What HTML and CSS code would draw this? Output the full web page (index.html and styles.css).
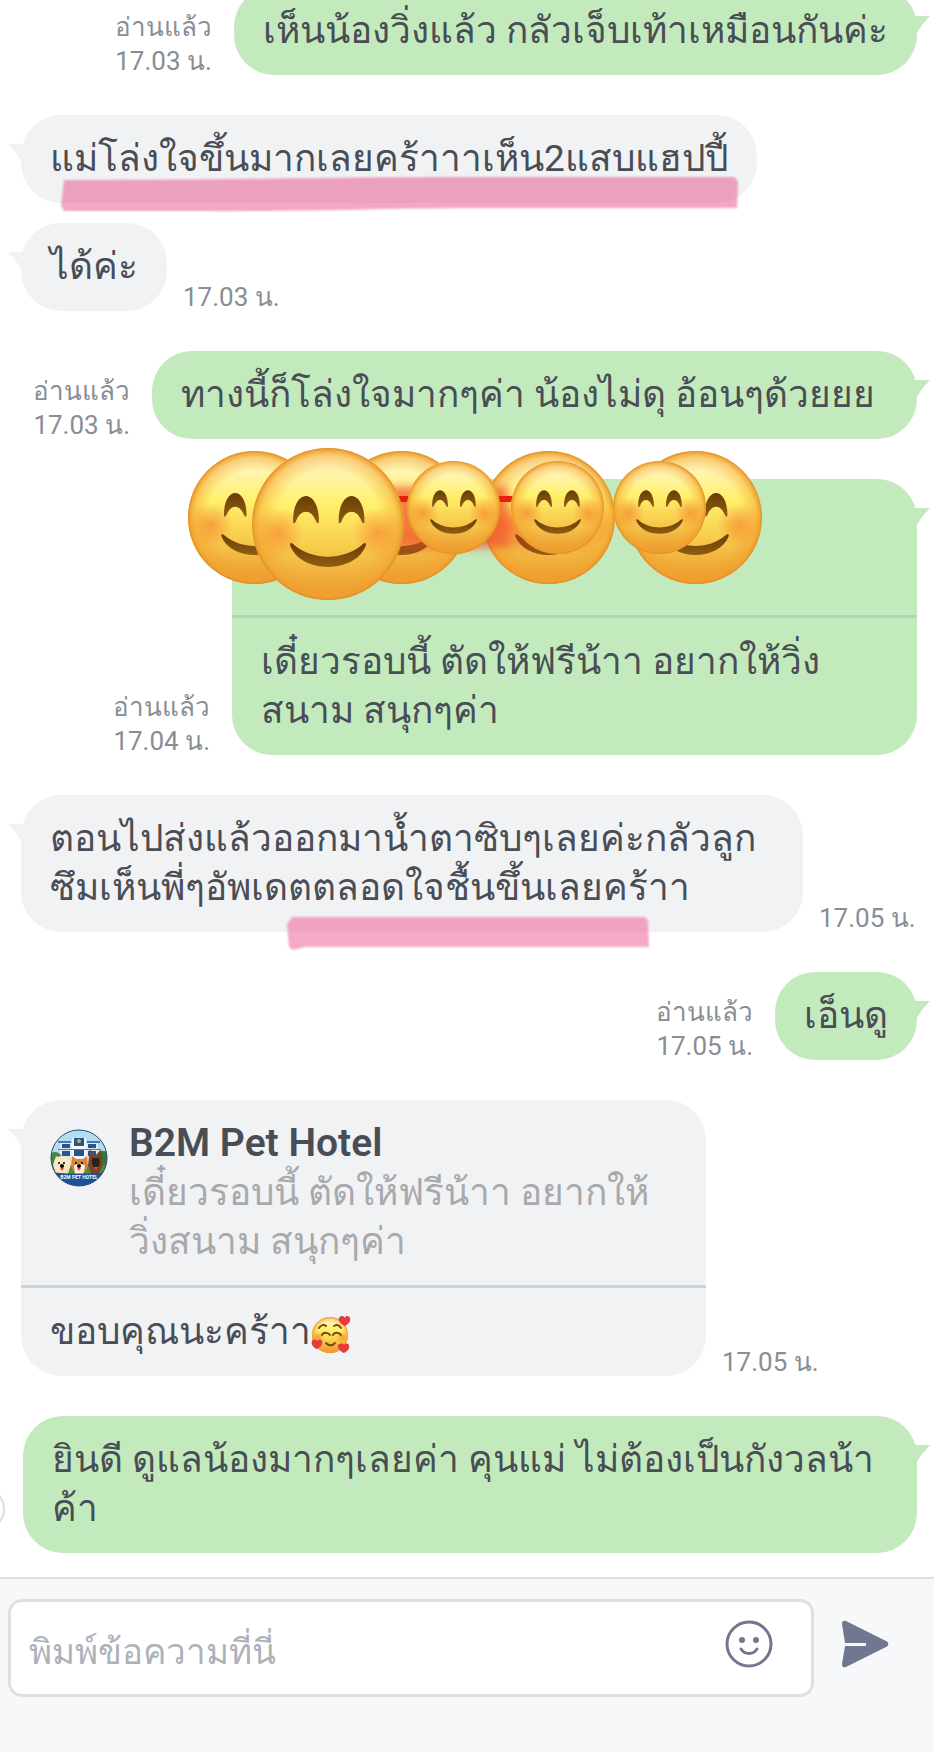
FILE: index.html
```html
<!DOCTYPE html>
<html lang="th">
<head>
    <meta charset="UTF-8" />
    <meta name="viewport" content="width=device-width, initial-scale=1.0"/>
    <title>B2M Pet Hotel - Chat</title>
    <link rel="stylesheet" href="styles.css">
</head>
<body>
    <!-- Shared shapes -->
    <svg class="defs" width="0" height="0" aria-hidden="true">
        <defs>
            <linearGradient id="face-fill" x1="0" y1="0" x2="0" y2="1">
                <stop offset="0" stop-color="#fff0b0"/>
                <stop offset="0.12" stop-color="#fff5b8"/>
                <stop offset="0.38" stop-color="#fff06a"/>
                <stop offset="0.65" stop-color="#f8cc4c"/>
                <stop offset="1" stop-color="#ea9631"/>
            </linearGradient>
            <radialGradient id="face-edge">
                <stop offset="0.7" stop-color="#f0a028" stop-opacity="0"/>
                <stop offset="0.9" stop-color="#f2a02c" stop-opacity="0.45"/>
                <stop offset="0.96" stop-color="#f0a02c" stop-opacity="0.8"/>
                <stop offset="1" stop-color="#e08c2a"/>
            </radialGradient>
            <radialGradient id="cheek">
                <stop offset="0" stop-color="#f4812c" stop-opacity="0.65"/>
                <stop offset="0.4" stop-color="#f4812c" stop-opacity="0.4"/>
                <stop offset="1" stop-color="#f4812c" stop-opacity="0"/>
            </radialGradient>
            <linearGradient id="brown" x1="0" y1="0" x2="0" y2="1">
                <stop offset="0" stop-color="#6a3d05"/>
                <stop offset="1" stop-color="#8f5d14"/>
            </linearGradient>
            <filter id="smear" x="-10%" y="-20%" width="120%" height="140%">
                <feGaussianBlur stdDeviation="4"/>
            </filter>
            <filter id="marker" x="-2%" y="-10%" width="104%" height="120%">
                <feGaussianBlur stdDeviation="1"/>
            </filter>
            <symbol id="smile" viewBox="0 0 100 100">
                <circle cx="50" cy="50" r="50" fill="url(#face-fill)"/>
                <circle cx="50" cy="50" r="50" fill="url(#face-edge)"/>
                <circle cx="17" cy="56" r="17" fill="url(#cheek)"/>
                <circle cx="83" cy="56" r="17" fill="url(#cheek)"/>
                <path d="M27 48c0-22 17-22 17 0 0 2-1 2-2 0-3-8-10-8-13 0-1 2-2 2-2 0z" fill="url(#brown)"/>
                <path d="M57 48c0-22 17-22 17 0 0 2-1 2-2 0-3-8-10-8-13 0-1 2-2 2-2 0z" fill="url(#brown)"/>
                <path d="M25 64c0-2 1-2 3 0 12 10 32 10 44 0 2-2 3-2 3 0-7 19-43 19-50 0z" fill="url(#brown)"/>
            </symbol>
        </defs>
    </svg>

    <main class="chat">
        <div class="message sent">
            <div class="meta"><span>อ่านแล้ว</span><time>17.03 น.</time></div>
            <div class="bubble">เห็นน้องวิ่งแล้ว กลัวเจ็บเท้าเหมือนกันค่ะ</div>
        </div>

        <div class="message received">
            <div class="bubble">
                แม่โล่งใจขึ้นมากเลยคร้าาาเห็น2แสบแฮปปี้
                <svg class="highlight highlight-full" viewBox="0 0 678 36" preserveAspectRatio="none" aria-hidden="true">
                    <path d="M4 4C180 4 280 1 400 1h274l4 4-1 27H440C320 32 240 36 130 35H4l-3-5z" fill="#e85a94" fill-opacity="0.54" filter="url(#marker)"/>
                </svg>
            </div>
        </div>

        <div class="message received follow">
            <div class="bubble">ได้ค่ะ</div>
            <div class="meta"><time>17.03 น.</time></div>
        </div>

        <div class="message sent">
            <div class="meta"><span>อ่านแล้ว</span><time>17.03 น.</time></div>
            <div class="bubble bubble-medium">ทางนี้ก็โล่งใจมากๆค่า น้องไม่ดุ อ้อนๆด้วยยย</div>
        </div>

        <div class="message sent">
            <div class="meta"><span>อ่านแล้ว</span><time>17.04 น.</time></div>
            <div class="bubble reply">
                <div class="quote quote-hidden"></div>
                <div class="reply-text">เดี๋ยวรอบนี้ ตัดให้ฟรีน้าา อยากให้วิ่ง<br>สนาม สนุกๆค่า</div>
                <!-- Emoji stickers covering the quoted message -->
                <svg class="stickers" viewBox="0 0 574 152" aria-hidden="true">
                    <use href="#smile" x="0" y="3" width="133" height="133"/>
                    <use href="#smile" x="147" y="3" width="133" height="133"/>
                    <use href="#smile" x="294" y="3" width="133" height="133"/>
                    <use href="#smile" x="441" y="3" width="133" height="133"/>
                    <g filter="url(#smear)">
                        <rect x="190" y="39" width="130" height="61" fill="#f0452c" fill-opacity="0.65"/>
                        <rect x="320" y="66" width="80" height="34" fill="#f0452c" fill-opacity="0.35"/>
                    </g>
                    <rect x="200" y="48" width="130" height="6" fill="#e6200c"/>
                    <use href="#smile" x="64" y="0" width="152" height="152"/>
                    <use href="#smile" x="219" y="13" width="93" height="93"/>
                    <use href="#smile" x="323" y="13" width="93" height="93"/>
                    <use href="#smile" x="425" y="13" width="93" height="93"/>
                </svg>
            </div>
        </div>

        <div class="message received">
            <div class="bubble bubble-large">
                ตอนไปส่งแล้วออกมาน้ำตาซิบๆเลยค่ะกลัวลูก<br>ซึมเห็นพี่ๆอัพเดตตลอดใจชื้นขึ้นเลยคร้าา
                <svg class="highlight highlight-part" viewBox="0 0 362 34" preserveAspectRatio="none" aria-hidden="true">
                    <path d="M5 1h353l3 4 1 26H18L6 34l-4-3L0 8z" fill="#ee5f98" fill-opacity="0.54" filter="url(#marker)"/>
                </svg>
            </div>
            <div class="meta"><time>17.05 น.</time></div>
        </div>

        <div class="message sent">
            <div class="meta"><span>อ่านแล้ว</span><time>17.05 น.</time></div>
            <div class="bubble">เอ็นดู</div>
        </div>

        <div class="message received">
            <div class="bubble reply">
                <div class="quote">
                    <svg class="avatar" viewBox="0 0 58 58" role="img" aria-label="B2M Pet Hotel">
                        <clipPath id="avatar-clip"><circle cx="29" cy="29" r="28"/></clipPath>
                        <g clip-path="url(#avatar-clip)">
                            <rect width="58" height="58" fill="#b4dcf3"/>
                            <path d="M10 14h38v24H10z" fill="#dfe9f2"/>
                            <path d="M22 9h14v28H22z" fill="#f2f6fa"/>
                            <path d="M24 9h10v8H24zM12 15h8v4h-8zM38 15h8v4h-8zM12 22h8v5h-8zM24 20h10v7H24zM38 22h8v5h-8z" fill="#27548f"/>
                            <path d="M8 12h13v2H8zM37 12h13v2H37zM8 20h42v1H8z" fill="#4a78ad"/>
                            <circle cx="29" cy="12" r="2" fill="#d9a941"/>
                            <circle cx="5" cy="30" r="7" fill="#3f8a45"/>
                            <circle cx="53" cy="30" r="8" fill="#2f7a3b"/>
                            <path d="M0 36h58v10H0z" fill="#4a8f44"/>
                            <path d="M6 27l4 2 5 0 4-2 2 8-3 10H6L3 36z" fill="#f6dfae"/>
                            <circle cx="12" cy="35" r="8" fill="#fae8c2"/>
                            <path d="M22 27l4 3h7l4-3 1 10-4 8h-9l-4-8z" fill="#d9853a"/>
                            <path d="M24 37c2-3 9-3 11 0l-2 8h-8z" fill="#fff1da"/>
                            <path d="M40 20l4 6h3l4-6 2 16-5 10h-6l-4-10z" fill="#7a4523"/>
                            <path d="M42 29h7l1 6-4 7-4-7z" fill="#2e211d"/>
                            <circle cx="9" cy="34" r="1"/><circle cx="14" cy="34" r="1"/><circle cx="12" cy="37" r="2"/>
                            <circle cx="26" cy="34" r="1"/><circle cx="32" cy="34" r="1"/><circle cx="29" cy="37" r="2"/>
                            <path d="M10 39h4l-2 3zM27 39h4l-2 3zM44 38h4l-2 4z" fill="#d8504c"/>
                            <path d="M0 43c14 2 44 2 58 0v15H0z" fill="#1f4f94"/>
                            <text class="avatar-text" x="29" y="50" text-anchor="middle">B2M PET HOTEL</text>
                        </g>
                        <circle cx="29" cy="29" r="28" fill="none" stroke="#28486f" stroke-width="1"/>
                    </svg>
                    <div class="quote-body">
                        <strong class="quote-name">B2M Pet Hotel</strong>
                        <p class="quote-text">เดี๋ยวรอบนี้ ตัดให้ฟรีน้าา อยากให้<br>วิ่งสนาม สนุกๆค่า</p>
                    </div>
                </div>
                <div class="reply-text">ขอบคุณนะคร้าา<svg class="emoji" viewBox="0 0 40 40" role="img" aria-label="smiling face with hearts">
                        <circle cx="19" cy="20" r="18" fill="url(#face-fill)"/>
                        <circle cx="19" cy="20" r="18" fill="url(#face-edge)"/>
                        <circle cx="7" cy="22" r="6" fill="url(#cheek)"/>
                        <circle cx="31" cy="22" r="6" fill="url(#cheek)"/>
                        <path d="M8 13c2-3 5-4 7-2M23 11c3-2 5-1 7 2M11 20c1-3 6-3 8 0M22 20c1-3 6-3 8 0M15 28c2 3 7 3 9 0" fill="none" stroke="#7b480c" stroke-width="2" stroke-linecap="round"/>
                        <g fill="#e5383f">
                            <path d="M34 11c-5-2-7-6-6-8 2-3 5-2 6 0 1-3 4-2 5 0 1 4-2 6-5 8z"/>
                            <path d="M6 34c-5-2-6-6-5-8 1-2 4-2 5 0 1-2 4-2 5 0 1 3-1 6-5 8z"/>
                            <path d="M33 38c-5-2-7-6-6-8 2-2 5-2 6 0 1-2 4-2 5 0 1 3-1 6-5 8z"/>
                        </g>
                    </svg></div>
            </div>
            <div class="meta"><time>17.05 น.</time></div>
        </div>

        <div class="message sent share">
            <div class="bubble bubble-full">ยินดี ดูแลน้องมากๆเลยค่า คุนแม่ ไม่ต้องเป็นกังวลน้า<br>ค้า</div>
        </div>
    </main>

    <form class="composer">
        <div class="field">
            <input type="text" id="message" placeholder="พิมพ์ข้อความที่นี่" aria-label="พิมพ์ข้อความที่นี่" />
            <button type="button" class="icon-button" aria-label="Emoji">
                <svg width="48" height="48" viewBox="0 0 48 48">
                    <circle cx="24" cy="24" r="22" fill="none" stroke="#71778f" stroke-width="3"/>
                    <circle cx="17" cy="20" r="3" fill="#71778f"/>
                    <circle cx="31" cy="20" r="3" fill="#71778f"/>
                    <path d="M16 29c4 6 12 6 16 0" fill="none" stroke="#71778f" stroke-width="3" stroke-linecap="round"/>
                </svg>
            </button>
        </div>
        <button type="submit" class="icon-button" aria-label="Send">
            <svg width="48" height="48" viewBox="0 0 48 48">
                <path d="M5 1l40 20c3 1 3 5 0 6L5 47c-2 1-4 0-4-3l3-18h21v-3H4L1 4c0-3 2-4 4-3z" fill="#71778f"/>
            </svg>
        </button>
    </form>
</body>
</html>
```

FILE: styles.css
```css
* {
    box-sizing: border-box;
}

body {
    margin: 0;
    min-height: 100vh;
    display: flex;
    flex-direction: column;
    font-family: Roboto, 'Noto Sans', sans-serif;
    font-size: 37px;
    line-height: 49px;
    background-color: #fff;
    color: #494d55;
}

.defs {
    position: absolute;
}

/* Messages */
.chat {
    flex: 1 0 0;
    display: flex;
    flex-direction: column;
    justify-content: flex-end;
    gap: 40px;
    padding: 0 17px 24px 21px;
    overflow: hidden;
}

.message {
    display: flex;
    align-items: flex-end;
}

.sent {
    justify-content: flex-end;
    gap: 22px;
}

.received {
    gap: 16px;
}

.follow {
    margin-top: -20px;
}

.bubble {
    position: relative;
    max-width: 100%;
    padding: 19px 29px 20px;
    border-radius: 40px;
    background-color: #f1f2f4;
    white-space: nowrap;
}

.bubble-medium {
    width: 765px;
}

.bubble-large {
    flex-shrink: 0;
    width: 782px;
}

.bubble-full {
    width: 894px;
}

.sent .bubble {
    background-color: #c3eabc;
}

/* Bubble tail */
.bubble::after {
    content: "";
    position: absolute;
    top: 29px;
    left: -13px;
    width: 16px;
    height: 18px;
    background-color: inherit;
    clip-path: polygon(0 0, 100% 0, 100% 100%, 80% 90%, 45% 45%);
}

.sent .bubble::after {
    left: auto;
    right: -13px;
    clip-path: polygon(0 0, 100% 0, 55% 45%, 20% 90%, 0 100%);
}

.meta {
    display: flex;
    flex-direction: column;
    align-items: flex-end;
    margin-bottom: -3px;
    font-size: 26px;
    line-height: 34px;
    color: #898d94;
    white-space: nowrap;
}

/* Replies */
.reply {
    width: 685px;
    padding: 0;
}

.quote {
    display: flex;
    gap: 21px;
    padding: 19px 29px;
    border-bottom: 3px solid #ced2dc;
}

.sent .quote {
    border-color: #b4d3b3;
}

.quote-hidden {
    height: 139px;
}

.quote-name {
    display: block;
    font-size: 39px;
    font-weight: 600;
}

.quote-text {
    margin: 0;
    color: #a8a9ac;
}

.reply-text {
    padding: 19px 29px 20px;
}

.avatar {
    flex-shrink: 0;
    width: 58px;
    height: 58px;
    margin-top: 10px;
}

.avatar-text {
    font-size: 5px;
    font-weight: 700;
    fill: #fff;
}

.emoji {
    width: 40px;
    height: 40px;
    vertical-align: -11px;
}

.stickers {
    position: absolute;
    top: -31px;
    right: 155px;
    width: 574px;
    height: 152px;
}

/* Marker strokes */
.highlight {
    position: absolute;
    overflow: visible;
}

.highlight-full {
    top: 61px;
    left: 39px;
    width: 678px;
    height: 36px;
}

.highlight-part {
    top: 121px;
    left: 266px;
    width: 362px;
    height: 34px;
}

/* Share button, mostly off the left edge */
.share {
    position: relative;
}

.share::before {
    content: "";
    position: absolute;
    left: -60px;
    top: 71px;
    width: 40px;
    height: 40px;
    border: 2px solid #dcdee2;
    border-radius: 50%;
}

/* Composer */
.composer {
    display: flex;
    align-items: center;
    gap: 27px;
    padding: 20px 45px 55px 8px;
    border-top: 2px solid #dddfe4;
    background-color: #f7f8fa;
}

.field {
    flex: 1;
    display: flex;
    align-items: center;
    height: 98px;
    padding: 0 38px 0 18px;
    border: 3px solid #dfe0e2;
    border-radius: 14px;
    background-color: #fff;
}

.field input {
    flex: 1;
    min-width: 0;
    padding: 8px 0 0;
    border: none;
    outline: none;
    background: none;
    font: inherit;
    font-size: 35px;
    color: inherit;
}

.field input::placeholder {
    color: #adb2ba;
    opacity: 1;
}

.icon-button {
    display: block;
    padding: 0 0 8px;
    border: none;
    background: none;
    line-height: 0;
    cursor: pointer;
}
```
